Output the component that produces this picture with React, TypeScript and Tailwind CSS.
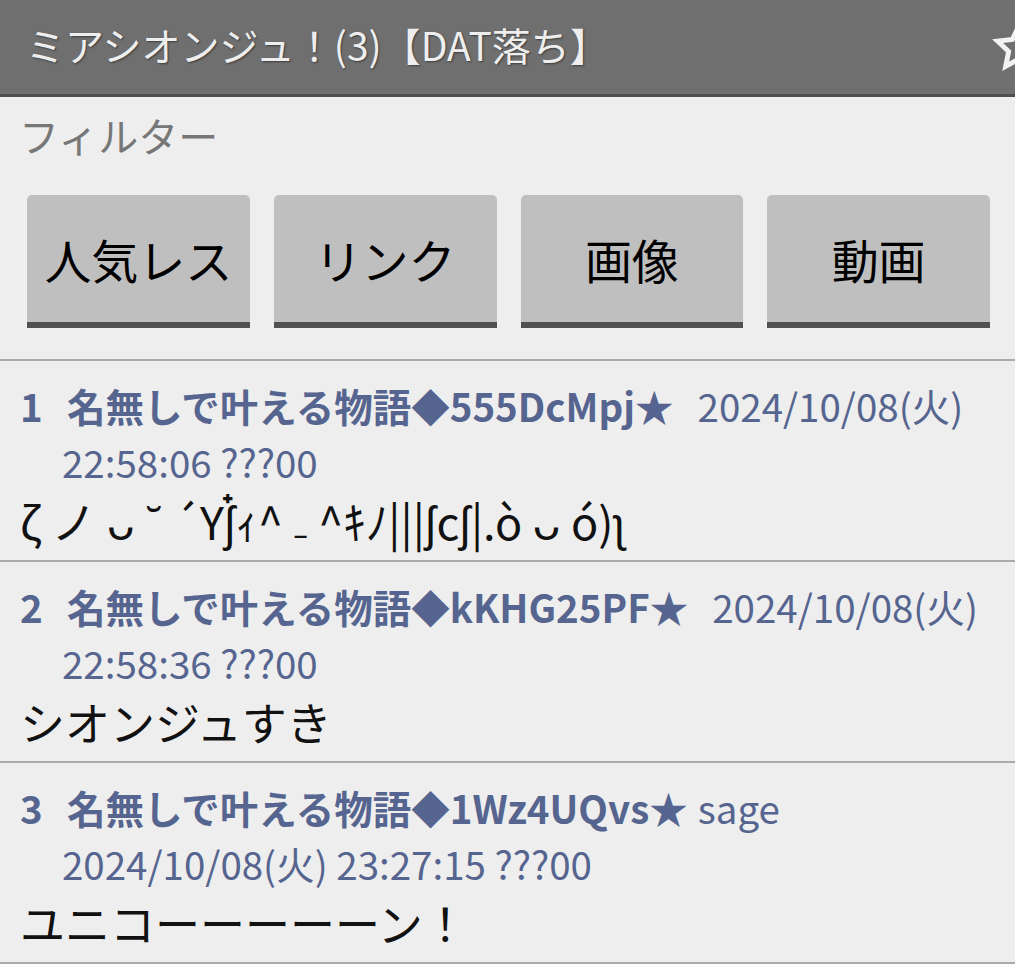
import React from 'react';

type Post = {
  no: number;
  name: string;
  line1Extra: string;
  line2: string;
  body: string;
};

const posts: Post[] = [
  {
    no: 1,
    name: '名無しで叶える物語◆555DcMpj★',
    line1Extra: '2024/10/08(火)',
    line2: '22:58:06 ???00',
    body: 'ζ ノ ᴗ ˘ ´Yʃ๋ｨ^ ₋ ^ｷﾉ|||ʃcʃ|.ò ᴗ ó)ʅ',
  },
  {
    no: 2,
    name: '名無しで叶える物語◆kKHG25PF★',
    line1Extra: '2024/10/08(火)',
    line2: '22:58:36 ???00',
    body: 'シオンジュすき',
  },
  {
    no: 3,
    name: '名無しで叶える物語◆1Wz4UQvs★',
    line1Extra: 'sage',
    line2: '2024/10/08(火) 23:27:15 ???00',
    body: 'ユニコーーーーーン！',
  },
];

const filters = ['人気レス', 'リンク', '画像', '動画'];

function StarOutline() {
  return (
    <svg width="54" height="54" viewBox="0 0 24 24" className="shrink-0">
      <path
        d="M12 2.5l2.9 6.1 6.6.8-4.9 4.6 1.3 6.6L12 17.3l-5.9 3.3 1.3-6.6-4.9-4.6 6.6-.8z"
        fill="none"
        stroke="#f2f2f2"
        strokeWidth="2.2"
        strokeLinejoin="miter"
      />
    </svg>
  );
}

export default function App() {
  return (
    <div
      className="min-h-[964px] w-[1015px] overflow-hidden bg-[#eeeeee]"
      style={{ fontFamily: '"Noto Sans CJK JP", "Noto Sans", sans-serif' }}
    >
      {/* header */}
      <div className="flex h-[97px] items-center justify-between overflow-hidden border-b-[3px] border-[#4e4e4e] bg-[#6f6f6f] pb-[6px] pl-[26px]">
        <h1 className="text-[39px] leading-none text-[#eeeeee] [text-shadow:1px_1px_2px_rgba(0,0,0,0.45)]">
          ミアシオンジュ！(3)【DAT落ち】
        </h1>
        <div className="-mr-[31px] mt-[6px]">
          <StarOutline />
        </div>
      </div>

      {/* filter */}
      <div className="px-[19px] pt-[12px] text-[40px] leading-[52px] text-[#777777]">フィルター</div>
      <div className="grid grid-cols-4 gap-[24px] pl-[27px] pr-[25px] pt-[34px] pb-[31px]">
        {filters.map((f) => (
          <button
            key={f}
            className="flex h-[133px] items-center justify-center rounded-t-[5px] border-b-[6px] border-[#505050] bg-[#bfbfbf] text-[47px] leading-none text-black"
          >
            {f}
          </button>
        ))}
      </div>

      {/* posts */}
      <div className="border-t-[2px] border-[#aaaaaa]">
        {posts.map((p) => (
          <div key={p.no} className="h-[201px] border-b-[2px] border-[#aaaaaa] pl-[20px] pt-[16px]">
            <div className="text-[38.5px] leading-[56px] text-[#56658f]">
              <div className="flex items-baseline whitespace-nowrap">
                <span className="w-[47px] font-bold">{p.no}</span>
                <span className="font-bold">{p.name}</span>
                <span className={p.line1Extra === 'sage' ? 'ml-[10px]' : 'ml-[24px]'}>{p.line1Extra}</span>
              </div>
              <div className="pl-[42px] whitespace-nowrap">{p.line2}</div>
            </div>
            <div className="mt-[4px] whitespace-nowrap text-[45px] leading-[56px] text-[#111111]">{p.body}</div>
          </div>
        ))}
      </div>
    </div>
  );
}
